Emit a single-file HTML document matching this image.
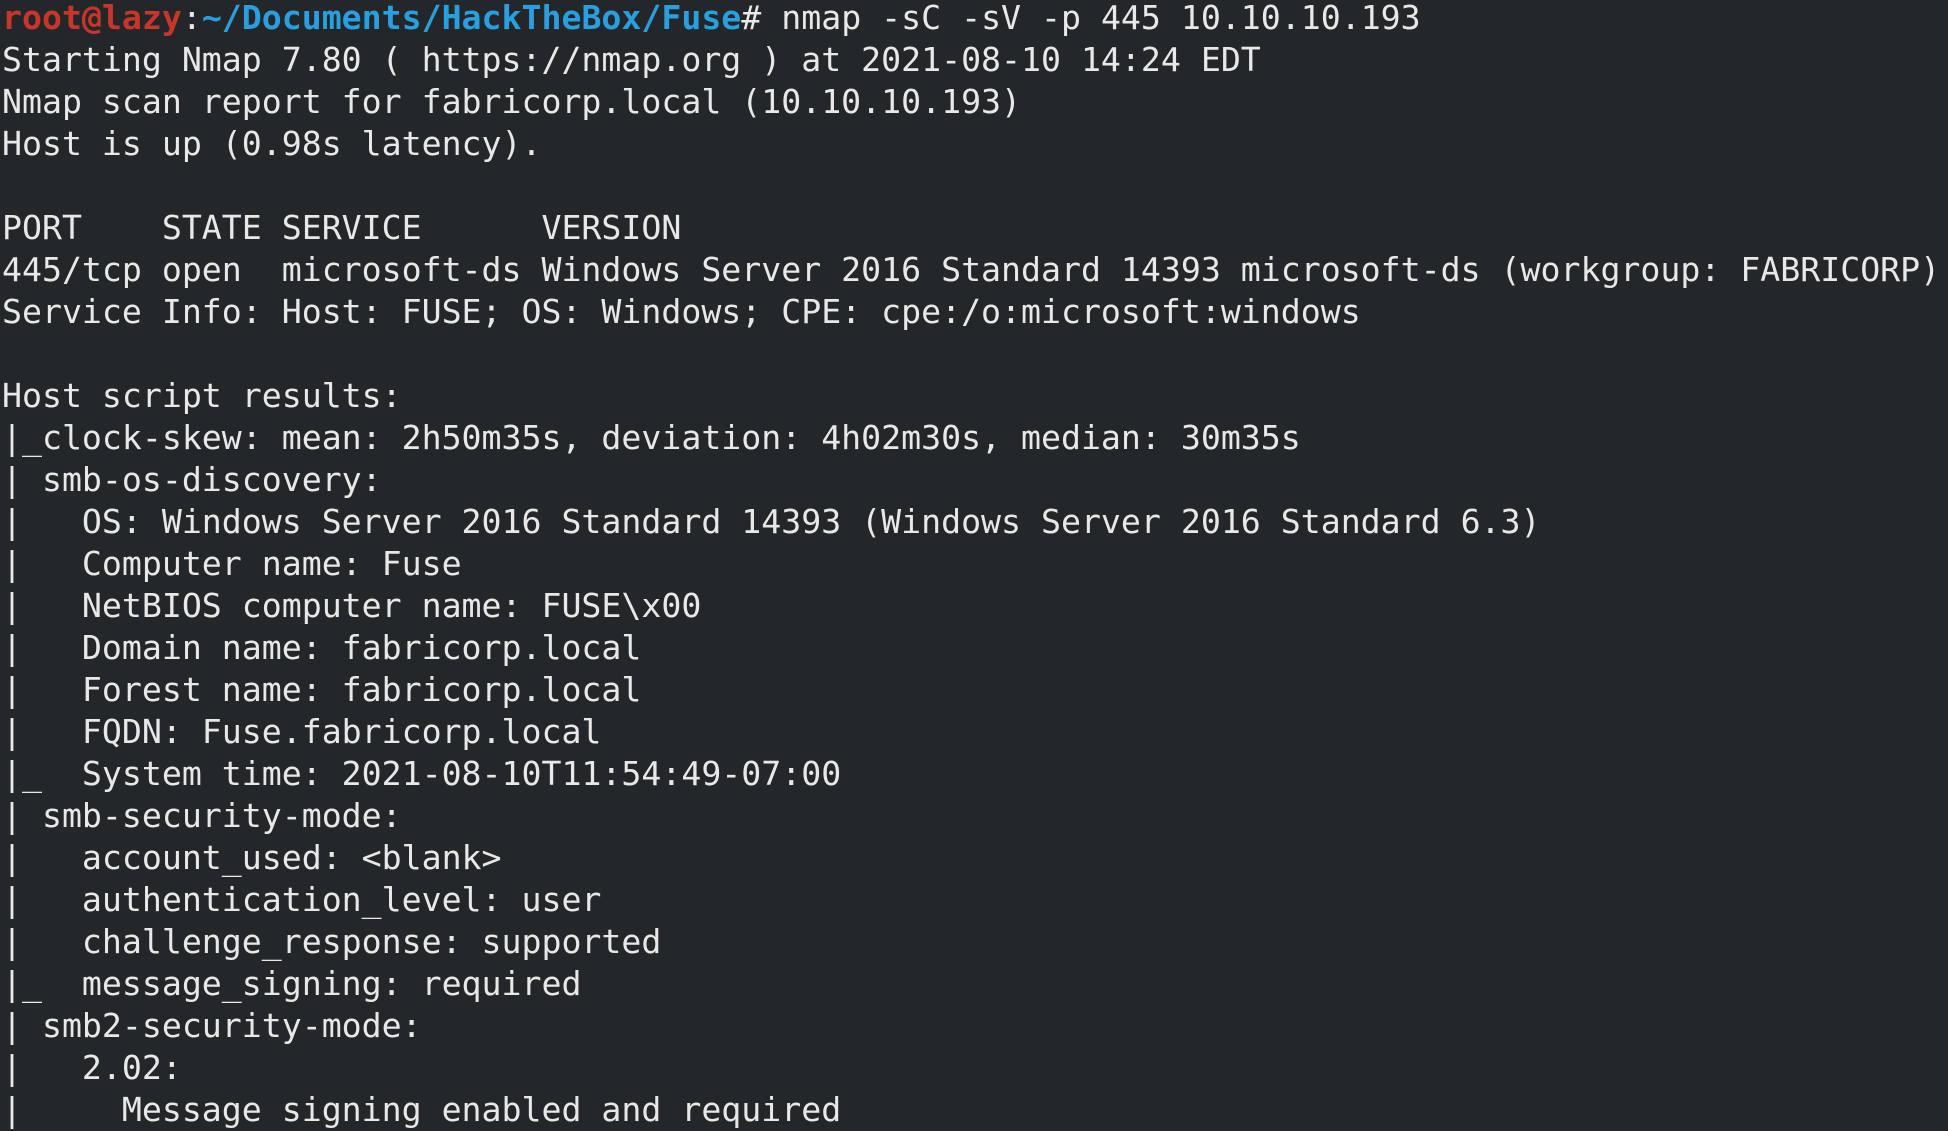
<!DOCTYPE html>
<html><head><meta charset="utf-8"><style>
html,body{margin:0;padding:0;background:#232729;width:1948px;height:1128px;overflow:hidden}
pre{margin:0;position:absolute;left:2px;top:-3px;font-family:"DejaVu Sans Mono","Liberation Mono",monospace;font-size:33.2px;line-height:42px;color:#e8e8e8;white-space:pre}
.r{color:#c8352b;font-weight:bold}.b{color:#2a9fe0;font-weight:bold}
</style></head><body><pre><span class="r">root@lazy</span>:<span class="b">~/Documents/HackTheBox/Fuse</span># nmap -sC -sV -p 445 10.10.10.193
Starting Nmap 7.80 ( https://nmap.org ) at 2021-08-10 14:24 EDT
Nmap scan report for fabricorp.local (10.10.10.193)
Host is up (0.98s latency).

PORT    STATE SERVICE      VERSION
445/tcp open  microsoft-ds Windows Server 2016 Standard 14393 microsoft-ds (workgroup: FABRICORP)
Service Info: Host: FUSE; OS: Windows; CPE: cpe:/o:microsoft:windows

Host script results:
|_clock-skew: mean: 2h50m35s, deviation: 4h02m30s, median: 30m35s
| smb-os-discovery: 
|   OS: Windows Server 2016 Standard 14393 (Windows Server 2016 Standard 6.3)
|   Computer name: Fuse
|   NetBIOS computer name: FUSE\x00
|   Domain name: fabricorp.local
|   Forest name: fabricorp.local
|   FQDN: Fuse.fabricorp.local
|_  System time: 2021-08-10T11:54:49-07:00
| smb-security-mode: 
|   account_used: &lt;blank&gt;
|   authentication_level: user
|   challenge_response: supported
|_  message_signing: required
| smb2-security-mode: 
|   2.02: 
|     Message signing enabled and required
</pre></body></html>
